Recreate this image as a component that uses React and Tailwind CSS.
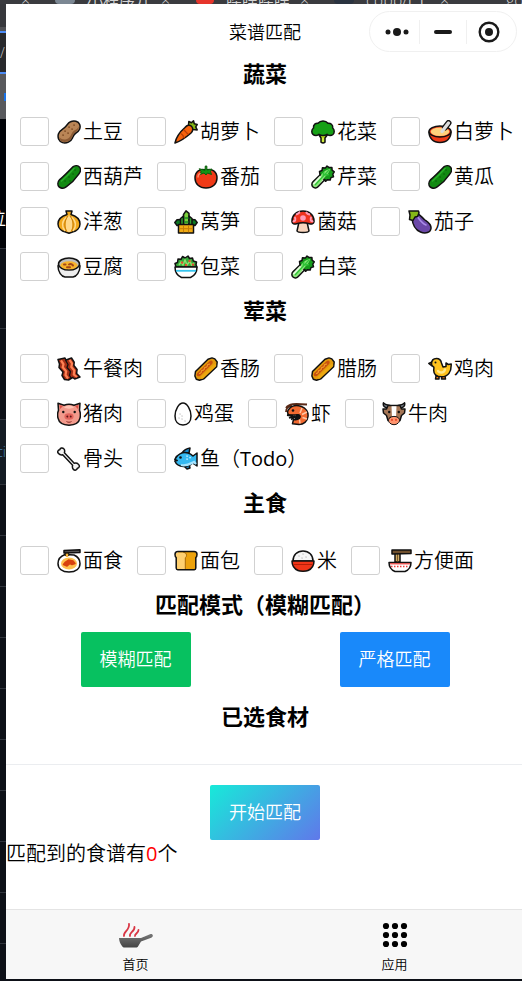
import React from "react";

const O = { stroke: "#111", strokeWidth: 1.5, strokeLinejoin: "round", strokeLinecap: "round" };

const cucumber = (
  <>
    <path {...O} fill="#128a12" d="M15.5 2.2C18 .2 21 .3 22.600 2.200c1.400 1.800 1 4.600-.8 6.900C18.800 13.500 14 18.500 9.500 21.600c-2.600 1.900-5.600 2-7.400.3-1.800-1.900-1.500-5 .6-7.300C5.500 12.200 12 5.800 15.500 2.200Z" />
    <path d="M17 3.500C13 8 8 13 4.500 16" fill="none" stroke="#2bb02b" strokeWidth="1.500" strokeLinecap="round" />
    <path d="M12 12l.1.1M16 9l.1.1M8 16l.1.1M13 16l.1.1M18 5l.1.1" stroke="#0a5d0a" strokeWidth="1.400" strokeLinecap="round" />
  </>
);
const leafy = (
  <>
    <path {...O} fill="#169c1b" d="M9 10 8.500 6.500 11 5.500l.5-2.800 2.800.4L16 1l2.200 1.600 2.700-.2.200 2.800 2.200 1.600-1.500 2.300.7 2.600-2.600.9-.7 2.500-2.700-.4-2 1.600Z" />
    <path fill="#8be87a" d="M11 9c2-2.500 4.500-4.500 8-5-1 4-3 6-5.300 8.200L7.500 21c-1.500 2-4 2.500-5.500 1s-1.600-4 .3-5.500Z" />
    <path d="M9 10l-6.800 6.600C.4 18.300.5 20.600 2 22s4 1.200 5.500-.7L14 14.500" fill="none" {...O} />
    <path d="M4 20 18 5M12 11l1-4M14 10l4-.5" fill="none" stroke="#2fc337" strokeWidth="1.300" />
    <path d="M2.800 18.600 9 12" stroke="#e5f7df" strokeWidth="1.800" strokeLinecap="round" />
  </>
);
const hotdog = (
  <>
    <path {...O} fill="#e39a0c" d="M14 2.300 18 .9l2.800 1L23.200 5l-.6 4.800L10 21.800l-4.500 1.400-3.200-.9L.9 19l.6-4.500Z" />
    <path d="M3.500 16 15.500 4.200c2-1.700 4.300.4 2.800 2.600L6.200 18.700c-2.400 1.800-4.700-.6-2.700-2.700Z" fill="#c9510f" />
    <path d="m5 16.500 2-.5.500-2.500 2.500-.5.500-2.500 2.500-.5.500-2.500 2.500-.5" fill="none" stroke="#f7a92a" strokeWidth="1" />
    <path d="M8 20.500 21 8.200" stroke="#eda810" strokeWidth="2.600" strokeLinecap="round" />
  </>
);

const ICONS = {
  potato: (
    <>
      <path {...O} fill="#b98556" d="M13.500 1.800C17 .2 21.400 1.200 22.700 4.500c1.300 3.500-.7 7-3.700 8.500-2 1-2.500 2.500-3.500 5-1.500 3.600-6 5.700-10 4.600C1.800 21.500.4 17.500 1.400 14c.9-3.200 3.400-4.500 5.600-6 2.500-1.600 3.500-5 6.500-6.200Z" />
      <path d="M2.300 17c1.500 3 7 3.500 10 .5 2.500-2.500 2.200-5.500 5-7 2-1 3.500-2 4.500-4C22 11 17.500 12 16 15c-1.400 3.800-3.500 7-8.500 7-3 0-5-2-5.200-5Z" fill="#8b5a34" />
      <path d="M8 11l.1.100M12 7l.1.100M17 5l.1.100M6 15l.1.100M11 13l.1.100M15 9l.1.100" stroke="#75441f" strokeWidth="1.500" strokeLinecap="round" />
    </>
  ),
  carrot: (
    <>
      <path {...O} fill="#84b816" d="m14.500 5.500.3-4 2.700 1.300L19.500.8l.8 2.900 2.900.8-1.500 2.400 1.500 3-4-.4Z" />
      <path {...O} fill="#f7630c" d="M11 7.500c2-2.500 4.600-3 6.500-1.200 2 2 1.500 5-.7 7C12.500 17 6.500 21.500 1 23c1-5.500 5.500-11.500 10-15.500Z" />
      <path d="m10 10 2 2M7.500 14l1.800 1.800M14 14l-1.500-1.300M10.500 18 9 16.800" stroke="#b93b06" strokeWidth="1.200" strokeLinecap="round" />
    </>
  ),
  broccoli: (
    <>
      <path {...O} fill="#b7d91c" d="m7.500 14 2.500 4v4.200c1.400 1 2.800 1 4 0V18l3-4Z" />
      <path {...O} fill="#16a016" d="M5 15.500C2.500 15.500.8 13.800.8 11.500c0-1.700.7-2.800 1.700-3.500C2 4.500 5 2.800 7 3.200 8.500 1.300 10 .9 12 .9s3.500.4 5 2.300c2.500-.3 5.200 1.500 4.700 4.800 1 .8 1.500 2 1.500 3.500 0 2.500-2 4-4.200 4-1.500 0-2.500-.6-3-1.200-2 1.500-6 1.500-8 0-.7.800-1.700 1.200-3 1.200Z" />
      <path d="M12 18v4" stroke="#d4ee4a" strokeWidth="1.500" />
    </>
  ),
  soup: (
    <>
      <path {...O} fill="#f03a17" d="M1 12c0 6 4 10.500 11 10.500S23 18 23 12Z" />
      <ellipse {...O} cx="12" cy="11.500" rx="11" ry="5.500" fill="#f03a17" />
      <ellipse cx="12" cy="11.800" rx="9.300" ry="4.200" fill="#ffd27c" />
      <path d="M17 7.500 20.500 3" stroke="#111" strokeWidth="6" strokeLinecap="round" />
      <path d="M14 11.500 20.500 3" stroke="#ddd" strokeWidth="3.400" strokeLinecap="round" />
    </>
  ),
  cucumber,
  leafy,
  hotdog,
  tomato: (
    <>
      <path {...O} fill="#f03a17" d="M12 5c6-2 11 1.500 11 8 0 6-4.500 10-11 10S1 19 1 13C1 6.500 6 3 12 5Z" />
      <path {...O} stroke="#0d5f0d" strokeWidth="1" fill="#149414" d="m11 5 .3-4h1.500L13 5l5-1-1.500 2.500 1 3-4-1.500L12 10l-2-2-3.800 1.500.8-3L5.500 4Z" />
      <path d="M4 12c0-2 .8-3 2-3.500" stroke="#ff8b6b" strokeWidth="1.500" fill="none" strokeLinecap="round" />
    </>
  ),
  onion: (
    <>
      <path {...O} fill="#f2a91b" d="M9 1h6l-1 3.500c5 1.500 9 4.500 9 9.500 0 4-3.500 7-7.500 8l-3.500 1.200L8.500 22C4.500 21 1 18 1 14c0-5 4-8 9-9.500Z" />
      <path d="M12 5c-4 4-4.500 12-1.500 17h3C16.500 17 16 9 12 5Z" fill="#ffd98a" />
      <path d="M9.500 7C4.500 11 4.500 17 8 21M14.500 7c5 4 5 10 1.500 14" fill="none" stroke="#ffd98a" strokeWidth="1.400" />
      <path d="M11 6c-4 5-4 11-1 16M13 6c4 5 4 11 1 16" fill="none" stroke="#c97f0a" strokeWidth="1" />
    </>
  ),
  bamboo: (
    <>
      <path {...O} fill="#0e7a22" d="m7 9.500-4 .3L.8 12.500 3 15.500h18l2.200-3-2.200-2.700-4-.3Z" />
      <path {...O} fill="#7bd13b" d="M9.500 15V4.500L12 .8l3 2.500V15Z" />
      <path {...O} fill="#2c9e2f" d="M6.500 15V8.500L9.500 6v9ZM15 15V6l3 2.500V15Z" />
      <path d="M10 8h4.500M10 12h4.500" stroke="#1f8b25" strokeWidth="1.400" />
      <path {...O} fill="#f0ab13" d="M4.500 14.500h15V23h-15Z" />
      <path d="M5.500 18.700h13M9.500 15.300v7M14.500 15.300v7" stroke="#c77c08" strokeWidth="1" />
    </>
  ),
  mushroom: (
    <>
      <path {...O} fill="#f9d5bd" d="M8 12h8l2 9c-1 2-11 2-12 0Z" />
      <path {...O} fill="#ef321d" d="M1 12C.5 5.500 5.500 1 12 1s11.500 4.500 11 11c-.3 1.800-2.500 2.500-4.500 1.800-4-1.200-9-1.200-13 0C3.500 14.500 1.200 13.800 1 12Z" />
      <circle cx="12" cy="8" r="2.800" fill="#ff9ab6" />
      <path d="M5 4.500c2.500-.5 3-2 4-2.500M15 2c1 2 2.500 2.500 4 2.500M1.800 11c2.500 1 3.500-2 1.700-4M22.200 11c-2.500 1-3.500-2-1.700-4" stroke="#ff9ab6" strokeWidth="2" fill="none" />
    </>
  ),
  eggplant: (
    <>
      <path {...O} fill="#6b48a8" d="M4 8 10 4c3 1.500 4.500 4 7 6 3 2 6.500 4 6 8.500-.5 4-5.500 5.500-10.500 3.500C7.500 20 4.500 14 4 8Z" />
      <path d="M10 7.500c2.500 3.500 4.500 6 8 7.500" fill="none" stroke="#a98be8" strokeWidth="1.600" strokeLinecap="round" />
      <path {...O} fill="#86b817" d="M1 1h9.500L11 3l-1.500 3.500L7 7l-2 3.500-3.500-1L2 5Z" />
    </>
  ),
  pot: (
    <>
      <path {...O} fill="#eeeeee" d="M1 11c0 6 3.500 10.500 7 11h8c3.500-.5 7-5 7-11l-2.500-4h-17Z" />
      <ellipse {...O} cx="12" cy="9" rx="10.500" ry="6" fill="#bdbdbd" />
      <ellipse cx="12" cy="10.300" rx="8.600" ry="4" fill="#f7b32b" />
      <path d="M12 9.500c1.500-1 3.500 0 4 1M7 9.500h1.500M10 12.300h3" stroke="#a3481a" strokeWidth="2" fill="none" strokeLinecap="round" />
    </>
  ),
  salad: (
    <>
      <path {...O} fill="#36a83a" d="M2 12 1 8.500l2.500-1L4 4l3 .3L8.500 1.500 11 3l3-2 1.500 2.500 3-.5.8 3L22.500 7 22 9.500l.8 2.500Z" />
      <path d="m5 10 2-3 2 3 2-5 2 5 3-4 1.500 4 2.500-2" stroke="#8be36a" strokeWidth="1.500" fill="none" />
      <path d="M8 7.500l.1.100M15.500 6l.1.100M12 10l.1.100M19 9.500l.1.100" stroke="#e8482d" strokeWidth="2.400" strokeLinecap="round" />
      <path {...O} fill="#fff" d="M1 12h22c0 5-3 9-6.500 10.500h-9C4 21 1 17 1 12Z" />
      <path d="M2 15.800h20" stroke="#35c4ee" strokeWidth="1.800" />
    </>
  ),
  bacon: (
    <>
      <path {...O} fill="#a52f16" d="M1 2.500 8 1l1 2 5.500-2 2.700 4.200-.3 3.300 3.200 4-.5 4 3.400 3.500-5.300 2-2-1.500L11.500 23l-4-.5-2.500-4 1-3.500-4-4.500.5-3.500Z" />
      <path d="m4 3.300 2.500 4-.8 3 3.500 4-.7 3.700 2.500 3.500M12.500 2.800 15 6.500l-.7 3.500 3 3.500-.5 4 3.200 2.500" fill="none" stroke="#ff8254" strokeWidth="2.200" />
      <path d="M8.500 3 11 7.500l-1 3 3.500 4-1 4 2 3" fill="none" stroke="#111" strokeWidth="1.300" />
    </>
  ),
  chick: (
    <>
      <path {...O} fill="#f57a18" d="M8 19h3v3H7.500ZM14 19h3l.5 3h-4ZM.8 6.500 4 5v4Z" />
      <path {...O} fill="#ffc21d" d="M3.500 7c0-3.500 2-5.500 5-5.500S13 3.500 13.500 6l1.500 4 3-.5V6l2.300 1.500L23.200 7c.3 8-3 12.800-9.500 12.800-5 0-8-2.500-8-6.500 0-1.500.5-2.500 0-3.300C4.500 9 3.500 8.500 3.500 7Z" />
      <path d="M10 14c2 2.500 6 2 7-1.500" fill="none" stroke="#ffe88b" strokeWidth="2.500" strokeLinecap="round" />
      <circle cx="7.500" cy="5.500" r="1" fill="#111" />
    </>
  ),
  pig: (
    <>
      <path {...O} fill="#f29a8c" d="M1 1.200 7 3.200c3-1 7-1 10 0l6-2-.5 7c.8 2 1.200 5 .5 8-1 4.500-5.500 7-11 7s-10-2.500-11-7c-.7-3-.3-6 .5-8Z" />
      <path d="M2.500 3 6 4 3 7ZM21.500 3 18 4l3 3Z" fill="#d94d43" />
      <path d="M12 3.500c2 0 4 .8 5 2-2 1.500-8 1.500-10 0 1-1.200 3-2 5-2Z" fill="#ffc2b3" />
      <ellipse cx="12" cy="14.500" rx="4.600" ry="3.200" fill="#e2645c" />
      <path d="M10.300 14.500l.1.100M13.700 14.500l.1.100" stroke="#5d1515" strokeWidth="1.800" strokeLinecap="round" />
      <circle cx="6.300" cy="10" r="1.200" fill="#111" /><circle cx="17.700" cy="10" r="1.200" fill="#111" />
      <path d="M9.500 19.500c1.500 1 3.500 1 5 0" stroke="#8c2a25" fill="none" />
    </>
  ),
  egg: (
    <>
      <path {...O} fill="#fff" d="M9 1c4 0 8 6.500 8 13 0 5.500-3 9-8 9s-8-3.500-8-9C1 7.500 5 1 9 1Z" />
      <path d="M6 12l.1.100M8 17l.1.100M5 16l.1.100M11 19l.1.100M8 14l.1.100" stroke="#bbb" strokeWidth="1.200" strokeLinecap="round" />
    </>
  ),
  shrimp: (
    <>
      <path d="M1 6C4 1.500 9 1.500 22 2.500M1 10c0-4 3-6 6-6" fill="none" stroke="#5a2a18" strokeWidth="1.800" />
      <path {...O} fill="#f26a30" d="M4 7c3-3.500 8-4 12.500-2.500C21 6 23.500 10 23 14.500c-.5 5-4.500 8-9 8l-6.500-.8 1-4.200c3 .8 6-.2 6.500-2.500.3-2-2-2.800-4-2L4 13c-2-1.500-1.800-4 0-6Z" />
      <path d="m17 6-2 5M22 10l-5 2.500M22 17l-4.500-1.500M15 21.500l-.5-4" stroke="#ffc6a4" strokeWidth="1.500" />
      <path d="M11 12.500c2.500-1 5 .5 4.500 2.500-.5 2.500-3.500 3-6 2.500Z" fill="#111" />
      <path d="m2 13 6 1M4 16l6-2M6 17.500l5-3" stroke="#111" strokeWidth="1.800" />
      <circle cx="8" cy="8.500" r="1.300" fill="#111" />
    </>
  ),
  cow: (
    <>
      <path {...O} fill="#777f89" d="M7 6C3 6.500.5 4 1.500.8 3 3 5 3 8 3.500ZM17 6c4 .5 6.500-2 5.500-5.200C21 3 19 3 16 3.500Z" />
      <path {...O} fill="#a57656" d="M6 3.500h12l1.500 3.500L23 7l-.5 4-3 2.500-1.500 5H6l-1.500-5-3-2.500L1 7l3.500 0Z" />
      <path d="M9.500 4.200h5L14 16h-4Z" fill="#fff" />
      <path {...O} strokeWidth="1" fill="#ff946e" d="M8 15.500c2-1.500 6-1.500 8 0 2 1.500 2 4 0 5.700-2 2-6 2-8 0-2-1.700-2-4.200 0-5.700Z" />
      <path d="M10 17.500v.8M14 17.500v.8" stroke="#e03a1c" strokeWidth="1.600" strokeLinecap="round" />
      <circle cx="7.200" cy="10" r="1.200" fill="#111" /><circle cx="16.800" cy="10" r="1.200" fill="#111" />
    </>
  ),
  bone: (
    <path {...O} fill="#f4f4f4" d="M1.500 6.500C0 5 .8 3 2.800 2.800 3 .8 5.500.3 6.800 1.800c1.200 1.200 1 2.700.6 4l9.800 10.400c1.500-.3 3-.2 4.200 1 1.700 1.500 1 3.600-1 4-.3 2-2.600 2.600-4 1.200-1.200-1.200-1.200-2.700-.8-4.200L5.700 7.800c-1.500.3-3 .1-4.200-1.300Z" />
  ),
  fish: (
    <>
      <path {...O} fill="#1787c9" d="M8 6c2-3 4.500-4.500 8-5l-1 5ZM9 18l4 4 3-1-1-4Z" />
      <path {...O} fill="#35b8f0" d="M.8 12.500C3 7 9 4.500 14 6c2 .5 3.500 1.500 5 3l4-3v13l-4.500-3C16 18.500 13 19.700 9.500 19.500 5 19.300 2 17 .8 14l2.400-.5Z" />
      <path d="M7 18c5 1.500 9-1 13-3l2 2" stroke="#a5e4ff" strokeWidth="2.300" fill="none" />
      <path d="M13 9l.1.100M16 10.500l.1.100M13 12l.1.100" stroke="#c6efff" strokeWidth="1.600" strokeLinecap="round" />
      <circle cx="6.500" cy="10.500" r="1.300" fill="#111" />
    </>
  ),
  spaghetti: (
    <>
      <path {...O} fill="#fff" d="M8 5.500C4 7 1 10 1 14.500 1 19.500 5 23 12 23s11-3.500 11-8.500c0-4-2.500-7-6-8.500Z" />
      <ellipse cx="12" cy="14.500" rx="8" ry="6" fill="#ffc04d" />
      <path d="M6.500 15.500 8.500 13l3-2 4.500 1 2 2.500-3 1-2-1-3 2.500Z" fill="#d8410e" stroke="#d8410e" strokeWidth="1.500" strokeLinejoin="round" />
      <path d="M10 2v5" stroke="#111" strokeWidth="4.500" /><path d="M10 2v6" stroke="#f5b43c" strokeWidth="2.500" />
      <path {...O} fill="#555" d="m7 1.500 16-.7v2.600L7 4Z" />
    </>
  ),
  bread: (
    <>
      <path fill="#eda20c" d="M4 3h16c2 0 3 1.300 3 3s-.5 2.500-1.200 3v10c0 1-.6 1.700-1.500 1.700H4.500Z" />
      <path fill="#ffd070" d="M4 3.500h5.500c1.800 0 3 1 3 2.800 0 1.400-.6 2-1.200 2.500v11.700H3.200c-.7 0-1-.5-1-1V9C1.500 8.500 1 7.700 1 6.300 1 4.500 2.200 3.500 4 3.500Z" />
      <path fill="none" stroke="#a86a05" d="M9.500 3.500c1.800 0 3 1 3 2.800 0 1.400-.6 2-1.200 2.500v11.500" />
      <path fill="none" {...O} d="M4 2.500h16c2 0 3 1.300 3 3s-.5 2.500-1.200 3V19c0 1-.6 1.700-1.500 1.700H3.700c-.9 0-1.500-.7-1.500-1.700V8.500C1.500 8 1 7.200 1 5.500c0-1.700 1-3 3-3Z" />
    </>
  ),
  rice: (
    <>
      <path {...O} fill="#f5f5f5" d="M2 12C2 6 6 2 12 2s10 4 10 10Z" />
      <path d="M8 7l.1.100M12 5l.1.100M15 8l.1.100M11 9l.1.100" stroke="#bbb" strokeWidth="1.300" strokeLinecap="round" />
      <path {...O} fill="#ef3518" d="M1 12h22c0 5-2.500 8-6 9.500-2 1-8 1-10 0C3.500 20 1 17 1 12Z" />
      <path d="M2.500 15.500h19" stroke="#b31f08" strokeWidth="1" />
    </>
  ),
  ramen: (
    <>
      <path {...O} fill="#d9b36a" d="M7 3h5v10H7Z" />
      <path d="M9.500 4v9" stroke="#7a5a2a" strokeWidth="1.200" />
      <path {...O} fill="#70502e" d="M4 1h19v3.500L4 5Z" />
      <path {...O} fill="#fff" d="M1 13.500h22c0 4.500-2.500 7.500-6 9H7c-3.500-1.500-6-4.500-6-9Z" />
      <path d="M2 14.800h20" stroke="#ef3b38" strokeWidth="1.200" />
      <path d="M3 17.500h18" stroke="#ef3b38" strokeWidth="1.600" strokeDasharray="1.500 1.500" />
    </>
  ),
};

const SECTIONS = [
  { title: "蔬菜", items: [["potato", "土豆"], ["carrot", "胡萝卜"], ["broccoli", "花菜"], ["soup", "白萝卜"], ["cucumber", "西葫芦"], ["tomato", "番茄"], ["leafy", "芹菜"], ["cucumber", "黄瓜"], ["onion", "洋葱"], ["bamboo", "莴笋"], ["mushroom", "菌菇"], ["eggplant", "茄子"], ["pot", "豆腐"], ["salad", "包菜"], ["leafy", "白菜"]] },
  { title: "荤菜", items: [["bacon", "午餐肉"], ["hotdog", "香肠"], ["hotdog", "腊肠"], ["chick", "鸡肉"], ["pig", "猪肉"], ["egg", "鸡蛋"], ["shrimp", "虾"], ["cow", "牛肉"], ["bone", "骨头"], ["fish", "鱼", "Todo"]] },
  { title: "主食", items: [["spaghetti", "面食"], ["bread", "面包"], ["rice", "米"], ["ramen", "方便面"]] },
];

function Heading({ children }) {
  return <h2 className="mb-0.5 mt-1.5 text-center text-[22px] font-bold leading-[30px]">{children}</h2>;
}

function Ingredient({ icon, name, note }) {
  const narrow = icon === "egg";
  return (
    <label className="flex h-[45px] items-center whitespace-nowrap text-xl">
      <input type="checkbox" className="mr-2 size-[29px] shrink-0 appearance-none rounded-[3px] border border-[#d1d1d1] bg-white checked:bg-[#07c160]" />
      <svg viewBox={narrow ? "0 0 18 24" : "0 0 24 24"} className={narrow ? "mr-0.5 h-6 w-[18px]" : "mr-0.5 size-6"} aria-hidden="true">
        {ICONS[icon]}
      </svg>
      <span>
        {name}
        {note && <>（<span className="font-normal">{note}</span>）</>}
      </span>
    </label>
  );
}

function Backdrop() {
  return (
    <div className="flex w-1.5 shrink-0 flex-col overflow-hidden bg-[#0d1017] text-sm text-white" aria-hidden="true">
      <div className="h-[23px] bg-[#37383c]" />
      <div className="h-1 bg-[#505155]" />
      <div className="flex h-[43px] items-center border-y-2 border-[#4c8bf5] bg-[#28292c] text-[#c8c8c8]">/</div>
      <div className="flex h-[45px] items-center justify-end bg-[#58595d]"><span className="h-2 w-0.5 bg-[#1a73e8]" /></div>
      <div className="flex h-[129px] items-end justify-end bg-[#010308] pb-[18px] text-lg leading-6">位</div>
      <div className="h-20 border-t border-[#30343c]" />
      <div className="h-[91px] border-t border-[#30343c]" />
      <div className="flex h-[66px] items-center justify-end border-y border-[#30343c] bg-[#141b23] text-[#4a83b8]">ci</div>
      {Array.from({ length: 9 }, (_, i) => (
        <div key={i} className="h-[51px] border-b border-[#30343c]" />
      ))}
    </div>
  );
}

function BrowserTabs() {
  return (
    <div className="flex h-1 items-end overflow-hidden bg-[#3a3b3f] pl-[21px] text-base leading-[7px] text-[#d5d5d5] *:shrink-0" aria-hidden="true">
      <span className="w-[34px]">×</span>
      <span className="mr-3 h-1 w-5 rounded-b-full bg-[#7b8793]" />
      <span className="w-[74px] whitespace-nowrap">小程序开</span>
      <span className="w-[35px]">×</span>
      <span className="mr-3 h-1 w-[18px] rounded-b-full bg-[#e6352b]" />
      <span className="w-[74px] whitespace-nowrap">哔哩哔哩</span>
      <span className="w-[34px]">×</span>
      <span className="mr-3 h-1 w-5 rounded-b-full bg-[#2a3340]" />
      <span className="w-[74px] whitespace-nowrap">cppp/门</span>
      <span className="w-[66px]">×</span>
      <span>go</span>
    </div>
  );
}

const BUTTON = "h-[55px] rounded-xs px-[19px] pb-0.5 text-lg text-white";

export default function App() {
  return (
    <div className="flex min-h-screen flex-col overflow-hidden bg-[#0d1017] font-['Open_Sans','Noto_Sans_CJK_SC',sans-serif] font-[350] text-black">
      <BrowserTabs />
      <div className="flex flex-1">
        <Backdrop />
        <main className="-mr-0.5 mb-0.5 flex min-w-0 flex-1 flex-col bg-white">
          <header className="grid grid-cols-[1fr_auto_1fr] items-center pt-[7px]">
            <h1 className="col-start-2 text-lg">菜谱匹配</h1>
            <div className="mr-[7px] flex h-[41px] w-[148px] items-center justify-self-end rounded-full border border-[#f0f0f0]">
              <button type="button" aria-label="更多" className="flex flex-1 justify-center pl-1">
                <svg viewBox="0 0 24 10" className="h-2.5 w-6" fill="#1a1a1a"><circle cx="3" cy="5" r="2.500" /><circle cx="12" cy="5" r="4" /><circle cx="21" cy="5" r="2.500" /></svg>
              </button>
              <button type="button" aria-label="最小化" className="flex h-6 flex-1 items-center justify-center border-x border-[#f0f0f0]">
                <span className="h-1 w-[18px] rounded-full bg-[#1a1a1a]" />
              </button>
              <button type="button" aria-label="关闭" className="flex flex-1 justify-center pr-1">
                <svg viewBox="0 0 22 22" className="size-[22px]"><circle cx="11" cy="11" r="9.300" fill="none" stroke="#1a1a1a" strokeWidth="2.400" /><circle cx="11" cy="11" r="4" fill="#1a1a1a" /></svg>
              </button>
            </div>
          </header>

          {SECTIONS.map((s) => (
            <section key={s.title}>
              <Heading>{s.title}</Heading>
              <div className="flex flex-wrap gap-x-3.5 pl-3.5 pt-[19px]">
                {s.items.map(([icon, name, note]) => <Ingredient key={name} icon={icon} name={name} note={note} />)}
              </div>
            </section>
          ))}

          <Heading>匹配模式（模糊匹配）</Heading>
          <div className="mt-[11px] flex justify-around">
            <button type="button" className={`${BUTTON} bg-[#07c160]`}>模糊匹配</button>
            <button type="button" className={`${BUTTON} bg-[#1989fa]`}>严格匹配</button>
          </div>

          <div className="border-b border-[#ebedf0] pb-[31px] pt-2">
            <Heading>已选食材</Heading>
          </div>
          <button type="button" className={`${BUTTON} mt-5 self-center bg-[linear-gradient(135deg,#17ead9,#6078ea)]`}>开始匹配</button>
          <p className="text-xl leading-7">匹配到的食谱有<span className="font-normal text-[#ff0000]">0</span>个</p>

          <nav className="mt-auto flex h-[70px] border-t border-[#e4e4e4] bg-[#f7f7f7] text-[13px] leading-5">
            <a href="#home" className="flex flex-1 flex-col items-center gap-1.5 pt-3">
              <svg viewBox="0 0 36 26" className="h-[26px] w-9" aria-hidden="true">
                <defs><linearGradient id="pan" x1="0" y1="0" x2="0" y2="1"><stop offset="0" stopColor="#787878" /><stop offset="1" stopColor="#444" /></linearGradient></defs>
                <path d="M6 14c-1-4 6-6 5-12M12 14c-1-3 5-5 4.500-9M17 14c-.5-2 3.500-3 3.500-6" fill="none" stroke="#d93644" strokeWidth="1.800" strokeLinecap="round" />
                <path d="M1 16h22l9-3.800c3-1 4 2.300 1.200 3.500L23 19.500l-3 5c-.5.800-1 1-2 1H7c-1.500 0-2.500-.5-3.200-1.800C2.200 21.500 1.200 19 1 16Z" fill="url(#pan)" />
              </svg>
              首页
            </a>
            <a href="#apps" className="flex flex-1 flex-col items-center gap-1.5 pt-3">
              <svg viewBox="0 0 26 26" className="size-[26px]" aria-hidden="true">
                {[4, 13, 22].map((y) => [4, 13, 22].map((x) => <circle key={`${x}-${y}`} cx={x} cy={y} r="3.100" />))}
              </svg>
              应用
            </a>
          </nav>
        </main>
      </div>
    </div>
  );
}
